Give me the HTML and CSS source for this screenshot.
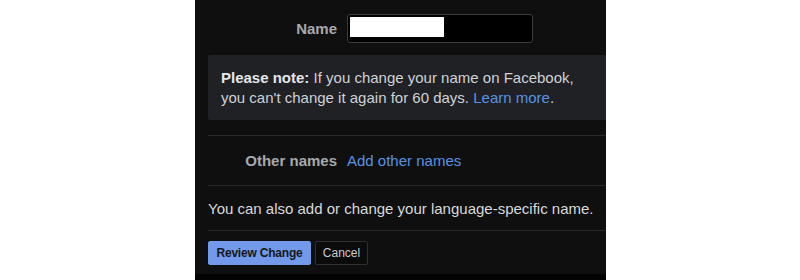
FILE: index.html
```html
<!DOCTYPE html>
<html lang="en">
<head>
<meta charset="utf-8">
<title>Name settings</title>
<link rel="stylesheet" href="styles.css">
</head>
<body>
<div class="panel">
  <div class="content">
    <div class="row name-row">
      <label class="label">Name</label>
      <div class="field"><span class="field-fill"></span></div>
    </div>
    <div class="note">
      <strong>Please note:</strong> If you change your name on Facebook, you can't change it again for 60 days. <a class="link" href="#">Learn more</a>.
    </div>
    <div class="sep sep-first"></div>
    <div class="row other-row">
      <span class="label">Other names</span>
      <a class="link" href="#">Add other names</a>
    </div>
    <div class="sep"></div>
    <p class="info">You can also add or change your language-specific name.</p>
    <div class="sep"></div>
    <div class="actions">
      <button class="btn btn-primary">Review Change</button>
      <button class="btn btn-secondary">Cancel</button>
    </div>
  </div>
  <div class="panel-foot"></div>
</div>
</body>
</html>
```
FILE: styles.css
```css
html, body {
  margin: 0;
  padding: 0;
  background: #ffffff;
}
body {
  font-family: "Liberation Sans", Arial, sans-serif;
  font-size: 15px;
}
.panel {
  margin-left: 195px;
  width: 411px;
  height: 280px;
  background: #0f0f0f;
  display: flex;
  flex-direction: column;
}
.content {
  flex: 1;
  padding-left: 13px;
  overflow: hidden;
}
.panel-foot {
  height: 6px;
  background: #030303;
}
.row {
  display: grid;
  grid-template-columns: 129px 1fr;
  column-gap: 10px;
  align-items: center;
}
.label {
  text-align: right;
  font-weight: bold;
  color: #a6a9ad;
  line-height: 17px;
}
.name-row {
  margin-top: 14px;
  height: 29px;
}
.field {
  box-sizing: border-box;
  width: 186px;
  height: 29px;
  border: 1px solid #3a3b3c;
  border-radius: 3px;
  background: #000;
  padding: 2px;
}
.field-fill {
  display: block;
  width: 94px;
  height: 20px;
  background: #ffffff;
}
.note {
  margin-top: 12px;
  box-sizing: border-box;
  height: 65px;
  background: #1f2125;
  border-radius: 2px 0 0 2px;
  padding: 13px 13px 0 13px;
  line-height: 20px;
  color: #cfd2d6;
}
.note strong {
  color: #e4e6eb;
}
.link {
  color: #5a92e2;
  text-decoration: none;
}
.sep {
  height: 1px;
  background: #2a2a2a;
}
.sep-first {
  margin-top: 15px;
}
.other-row {
  height: 49px;
}
.other-row .link {
  line-height: 17px;
}
.info {
  margin: 0;
  padding: 13px 0 11px 0;
  line-height: 20px;
  color: #d8d9db;
}
.actions {
  display: flex;
  gap: 4px;
  margin-top: 10px;
}
.btn {
  font-family: "Liberation Sans", Arial, sans-serif;
  font-size: 12px;
  height: 24px;
  box-sizing: border-box;
  border-radius: 2px;
  cursor: pointer;
}
.btn-primary {
  width: 103px;
  padding: 0;
  border: 1px solid #7299ea;
  background: #7299ea;
  color: #16181b;
  font-weight: bold;
  letter-spacing: -0.2px;
}
.btn-secondary {
  width: 53px;
  padding: 0;
  border: 1px solid #2f3032;
  background: #0b0b0b;
  color: #c9cacc;
}
```
